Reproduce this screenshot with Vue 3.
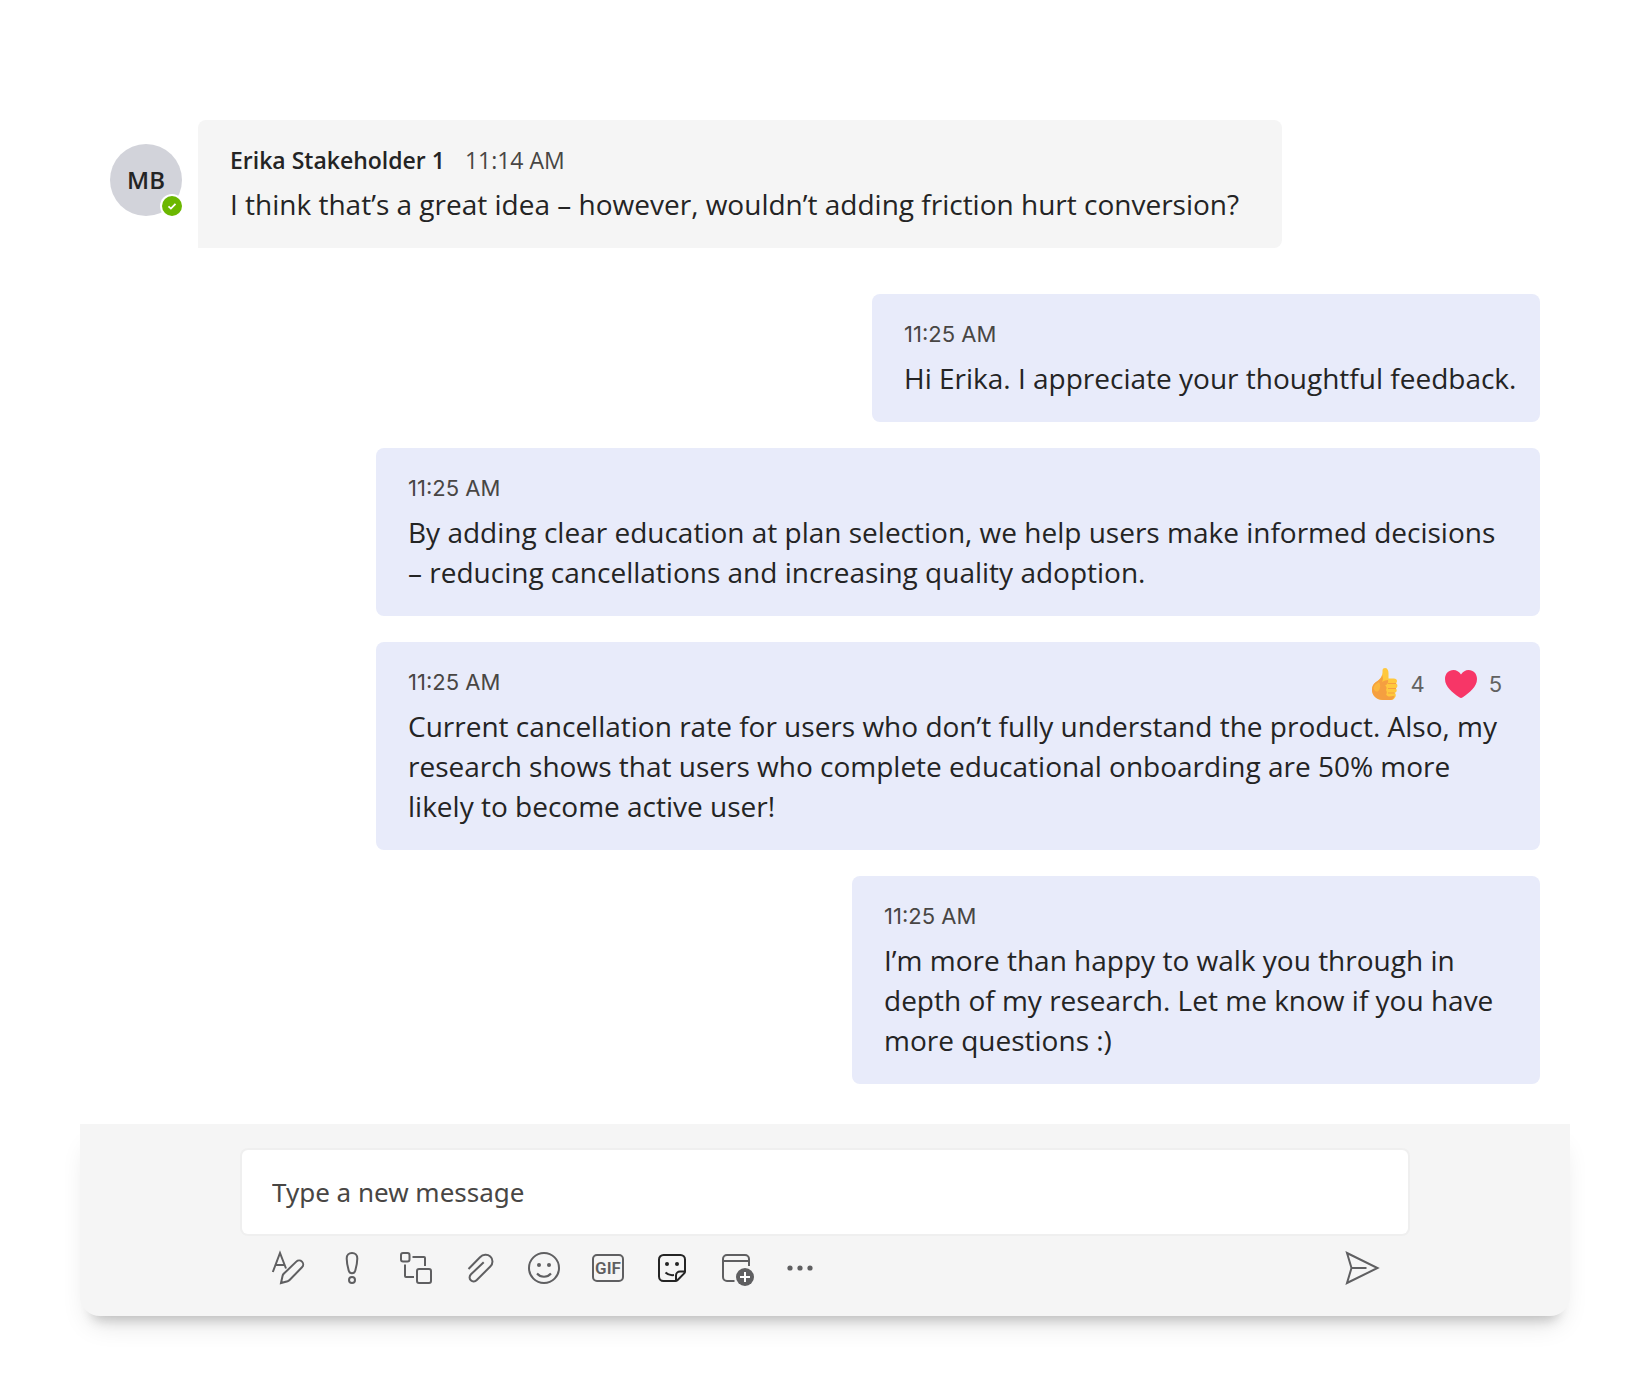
<script setup>
import { ref } from 'vue'

const draft = ref('')

const sent = [
  { id: 1, size: 'short', time: '11:25 AM', text: 'Hi Erika. I appreciate your thoughtful feedback.' },
  {
    id: 2,
    size: 'wide',
    time: '11:25 AM',
    text: 'By adding clear education at plan selection, we help users make informed decisions\n– reducing cancellations and increasing quality adoption.',
  },
  {
    id: 3,
    size: 'wide',
    time: '11:25 AM',
    text: 'Current cancellation rate for users who don’t fully understand the product. Also, my\nresearch shows that users who complete educational onboarding are 50% more\nlikely to become active user!',
    reactions: true,
  },
  {
    id: 4,
    size: 'medium',
    time: '11:25 AM',
    text: 'I’m more than happy to walk you through in\ndepth of my research. Let me know if you have\nmore questions :)',
  },
]
</script>

<template>
  <main class="chat">
    <section class="messages" aria-label="Conversation">
      <div class="received">
        <div class="avatar">
          MB
          <svg class="presence" viewBox="0 0 24 24" aria-label="Available">
            <circle cx="12" cy="12" r="12" fill="#fff" />
            <circle cx="12" cy="12" r="10" fill="#6bb700" />
            <path d="M8.500 12.300l2.400 2.300 4.600-4.800" fill="none" stroke="#fff" stroke-width="1.800" />
          </svg>
        </div>
        <article class="bubble incoming">
          <header class="meta">
            <strong class="name">Erika Stakeholder 1</strong>
            <time class="time-in">11:14 AM</time>
          </header>
          <p class="text">I think that’s a great idea – however, wouldn’t adding friction hurt conversion?</p>
        </article>
      </div>

      <div class="sent">
        <article v-for="m in sent" :key="m.id" class="bubble outgoing" :class="m.size">
          <header class="meta">
            <time class="time-out">{{ m.time }}</time>
            <div v-if="m.reactions" class="reactions">
              <button type="button" class="reaction" aria-label="Like, 4">
                <svg class="thumb" viewBox="0 0 26 32">
                  <path
                    d="M10.500 2.500C10.500.8 11.700 0 13 0c2.200 0 3.500 2 3.500 5v5.500h5.300c2 0 3.200 1 3.200 2.600 0 1-.4 1.700-1 2.200.9.500 1.400 1.300 1.400 2.400 0 1.200-.6 2.100-1.600 2.600.6.500.9 1.200.9 2 0 1.300-.8 2.200-2 2.500.7.500 1.100 1.200 1.100 2.200 0 1.700-.9 3-2.300 4.300-.6.500-1.300.7-2.200.7h-8C4.500 32 0 27.500 0 21.700c0-3.200 1.200-5.600 3.700-7.400C7.500 11.600 11 8.500 10.500 2.500z"
                    fill="#ffc83d"
                  />
                  <path
                    d="M3.700 14.300C7 12 9.600 10.200 10.200 7c1 3 .9 5-.2 7 1.800-1.200 4-1.900 6-2 .6 2.500-.4 4.600-2.800 5.500 1.500 1.200 1.800 2.800.8 4.500 1 1.500 1.100 3 .2 4.500.8 1.400 1.800 2 3.400 2l5-.8c-.3 1.300-1 2.500-1.900 3.600-.6.500-1.300.7-2.200.7h-7.200C4.500 32 0 27.500 0 21.700c0-3.200 1.200-5.600 3.700-7.400z"
                    fill="#f59f40"
                  />
                  <path d="M1.500 20c.5-3 2.500-4.500 5.500-6 1.500 2.500 2 6-1 9.500-2 .5-4-.5-4.500-3.500z" fill="#ffc83d" opacity=".55" />
                  <path d="M16 15.500h8M16 20.500h8M16 25h6.500" stroke="#f59f40" stroke-width="1.200" />
                </svg>
                <span>4</span>
              </button>
              <button type="button" class="reaction" aria-label="Heart, 5">
                <svg class="heart" viewBox="0 0 32 28">
                  <path
                    d="M16 4.500C18 1.500 20.500 0 23.500 0 28.500 0 32 3.800 32 9c0 8-7.500 13.500-14.200 18.300-1.200.9-2.400.9-3.600 0C7.500 22.500 0 17 0 9c0-5.200 3.500-9 8.500-9 3 0 5.500 1.500 7.500 4.500z"
                    fill="#f73667"
                  />
                </svg>
                <span>5</span>
              </button>
            </div>
          </header>
          <p class="text">{{ m.text }}</p>
        </article>
      </div>
    </section>

    <form class="composer" @submit.prevent>
      <input v-model="draft" class="field" type="text" placeholder="Type a new message" aria-label="Type a new message" />
      <div class="toolbar">
        <button type="button" class="tool" aria-label="Format">
          <svg viewBox="0 0 32 32">
            <path d="M.8 20L8 1l6 15.500M3.400 13h9.400" />
            <path d="M9 31l1.600-7.200c.2-.8.500-1.400 1.100-2L24.300 9.600a4 4 0 0 1 5.700 5.700L17.600 28c-.6.600-1.200.9-2 1.200z" />
          </svg>
        </button>
        <button type="button" class="tool" aria-label="Set delivery options">
          <svg viewBox="0 0 32 32">
            <path d="M16 1c3.200 0 5.300 2.200 5.300 5.400 0 4-1 8.500-2 12-.5 1.900-1.600 2.800-3.300 2.800s-2.800-.9-3.300-2.800c-1-3.500-2-8-2-12C10.700 3.200 12.800 1 16 1z" />
            <circle cx="16" cy="28" r="3" />
          </svg>
        </button>
        <button type="button" class="tool" aria-label="Loop components">
          <svg viewBox="0 0 32 32">
            <rect x="1" y="1" width="8.500" height="8.500" rx="2" />
            <rect x="17" y="17" width="14" height="14" rx="2" />
            <path d="M12.500 5H24a1 1 0 0 1 1 1v8M5 12.500V24a1 1 0 0 0 1 1h8" />
          </svg>
        </button>
        <button type="button" class="tool" aria-label="Attach files">
          <svg viewBox="0 0 32 32">
            <path d="M4.500 17L16 5.200c3-3 7.500-3.200 10.300-.7 2.900 2.600 2.900 7.200 0 10L12.800 28c-1.800 1.800-4.400 1.800-6 .3-1.700-1.600-1.600-4.200.2-6l12.700-12" />
          </svg>
        </button>
        <button type="button" class="tool" aria-label="Emoji">
          <svg viewBox="0 0 32 32">
            <circle cx="16" cy="16" r="15" />
            <path d="M9 21.500c3.500 4.200 10.500 4.200 14 0" />
            <circle class="solid" cx="11" cy="13" r="2" />
            <circle class="solid" cx="21" cy="13" r="2" />
          </svg>
        </button>
        <button type="button" class="tool" aria-label="GIF">
          <svg viewBox="0 0 32 32">
            <rect x="1" y="3" width="30" height="26" rx="4" />
            <text class="gif" x="16" y="22" text-anchor="middle">GIF</text>
          </svg>
        </button>
        <button type="button" class="tool dark" aria-label="Sticker">
          <svg viewBox="0 0 32 32">
            <path d="M19.500 29H7.500A4.500 4.500 0 0 1 3 24.500v-17A4.500 4.500 0 0 1 7.500 3h17A4.500 4.500 0 0 1 29 7.500v12c0 .8-.2 1.300-.8 1.900l-6.800 6.800c-.6.600-1.100.8-1.900.8zM20 28.500V23.500a4 4 0 0 1 4-4h5" />
            <path d="M9.500 20.500c2.200 2.200 5 3 8.500 2.500" />
            <circle class="solid" cx="11" cy="12" r="2" />
            <circle class="solid" cx="21" cy="12" r="2" />
          </svg>
        </button>
        <button type="button" class="tool" aria-label="Schedule a meeting">
          <svg viewBox="0 0 32 32">
            <path d="M29 14V7a4 4 0 0 0-4-4H7a4 4 0 0 0-4 4v18a4 4 0 0 0 4 4h7.500M3 9h26" />
            <circle class="solid" cx="25" cy="25" r="9" />
            <path class="plus" d="M25 20v10M20 25h10" />
          </svg>
        </button>
        <button type="button" class="tool" aria-label="More options">
          <svg viewBox="0 0 32 32">
            <circle class="solid" cx="6" cy="16" r="2.600" />
            <circle class="solid" cx="16" cy="16" r="2.600" />
            <circle class="solid" cx="26" cy="16" r="2.600" />
          </svg>
        </button>
        <button type="submit" class="tool send" aria-label="Send">
          <svg viewBox="0 0 32 32">
            <path d="M1 1l30.500 15L1 31l4.500-15zM5.500 16h15" />
          </svg>
        </button>
      </div>
    </form>
  </main>
</template>

<style>
body {
  background: #fff;
}
</style>

<style scoped>
.chat {
  padding: 120px 80px 80px;
  font-family: 'Open Sans', sans-serif;
  color: #242424;
}
.messages {
  padding: 0 30px 40px;
}
.received {
  display: flex;
  align-items: flex-start;
  gap: 16px;
}
.avatar {
  position: relative;
  flex: none;
  width: 72px;
  height: 72px;
  margin-top: 24px;
  border-radius: 50%;
  background: #d2d3da;
  font-size: 24px;
  font-weight: 600;
  line-height: 72px;
  text-align: center;
}
.presence {
  position: absolute;
  right: -2px;
  bottom: -2px;
  width: 24px;
  height: 24px;
}
.bubble {
  box-sizing: border-box;
  max-width: 100%;
  padding: 24px 16px 24px 32px;
  border-radius: 8px;
}
.incoming {
  width: 1084px;
  border-bottom-left-radius: 0;
  background: #f5f5f5;
}
.outgoing {
  background: #e8ebfa;
}
.short {
  width: 668px;
}
.medium {
  width: 688px;
}
.wide {
  width: 1164px;
}
.sent {
  display: flex;
  flex-direction: column;
  align-items: flex-end;
  gap: 26px;
  margin-top: 46px;
}
.meta {
  display: flex;
  align-items: center;
  height: 32px;
  margin-bottom: 8px;
}
.incoming .meta {
  gap: 20px;
}
.name {
  font-size: 23px;
  font-weight: 600;
}
.time-in {
  font-size: 23px;
  color: #484644;
}
.time-out {
  font-family: Inter, sans-serif;
  font-size: 22px;
  color: #484644;
}
.text {
  margin: 0;
  font-size: 28px;
  line-height: 40px;
  white-space: pre-line;
}
.reactions {
  display: flex;
  gap: 20px;
  margin-left: auto;
  margin-right: 22px;
  padding-top: 4px;
}
.reaction {
  display: flex;
  align-items: center;
  gap: 12px;
  padding: 0;
  border: 0;
  background: none;
  font-family: Inter, sans-serif;
  font-size: 22px;
  color: #616161;
}
.thumb {
  width: 26px;
  height: 32px;
}
.heart {
  width: 32px;
  height: 28px;
}
.composer {
  padding: 26px 162px 32px;
  border-radius: 0 0 20px 20px;
  background: #f5f5f5;
  box-shadow:
    0 16px 12px -12px rgba(0, 0, 0, 0.18),
    0 16px 28px -10px rgba(0, 0, 0, 0.14);
}
.field {
  box-sizing: border-box;
  display: block;
  width: 100%;
  height: 84px;
  padding: 0 30px;
  border: 0;
  border-radius: 6px;
  outline: 0;
  background: #fff;
  box-shadow: 0 0 0 2px #efefef;
  font-family: 'Noto Sans', sans-serif;
  font-size: 26px;
  color: #484644;
}
.field::placeholder {
  color: #484644;
  opacity: 1;
}
.toolbar {
  display: flex;
  gap: 32px;
  margin-top: 18px;
  padding: 0 30px;
}
.tool {
  flex: none;
  width: 32px;
  height: 32px;
  padding: 0;
  border: 0;
  background: none;
  color: #5f5f61;
}
.dark {
  color: #242424;
}
.send {
  margin-left: auto;
}
.tool svg {
  display: block;
  width: 32px;
  height: 32px;
  overflow: visible;
  fill: none;
  stroke: currentColor;
  stroke-width: 2;
}
.tool .solid {
  fill: currentColor;
  stroke: none;
}
.tool .plus {
  stroke: #fff;
}
.tool .gif {
  fill: currentColor;
  stroke: none;
  font-family: Roboto, sans-serif;
  font-size: 17px;
  font-weight: 600;
}
</style>
